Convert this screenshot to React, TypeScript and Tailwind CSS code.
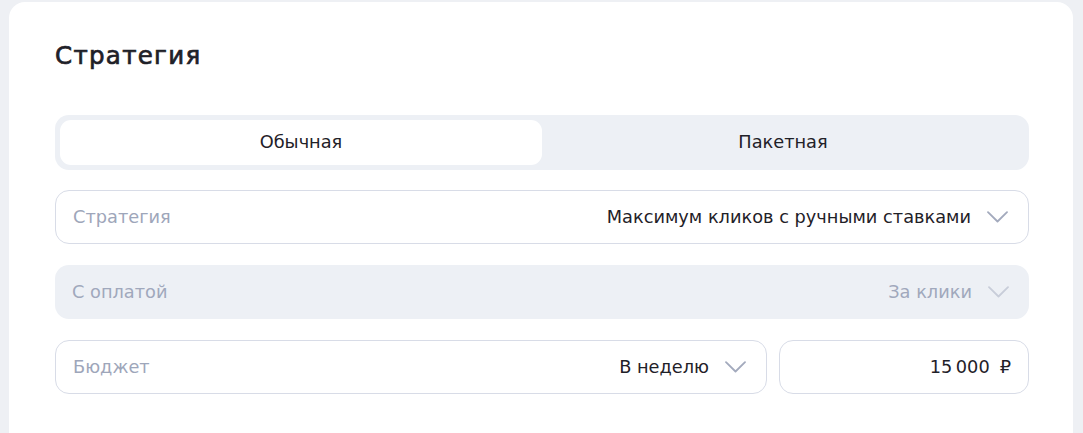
import React from "react";

const Chevron = ({ color }: { color: string }) => (
  <svg width="21" height="12" viewBox="0 0 21 12" fill="none" className="shrink-0">
    <path d="M1 1.2 L10.5 10.5 L20 1.2" stroke={color} strokeWidth="1.8" strokeLinecap="round" strokeLinejoin="round" />
  </svg>
);

export default function App() {
  return (
    <div className="w-[1083px] h-[433px] overflow-hidden bg-[#eef0f4] pt-[2px] pl-[9px] pr-[10px]" style={{ fontFamily: "'DejaVu Sans', 'Noto Sans', sans-serif" }}>
      <div className="bg-white rounded-[16px] h-[460px] pl-[46px] pr-[44px] pt-[38px]">
        <h1 className="text-[24.5px] leading-[32px] font-normal tracking-[1.3px] text-[#1f2128] [-webkit-text-stroke:0.7px_#1f2128]">Стратегия</h1>

        <div className="mt-[43px] h-[55px] rounded-[14px] bg-[#edf0f5] p-[5px] flex">
          <div className="flex-1 rounded-[11px] bg-white flex items-center justify-center text-[17.75px] text-[#1f2128]">Обычная</div>
          <div className="flex-1 flex items-center justify-center text-[17.75px] text-[#1f2128]">Пакетная</div>
        </div>

        <div className="mt-[20px] h-[54px] rounded-[14px] border border-[#d8dce7] flex items-center pl-[17px] pr-[20px]">
          <span className="text-[17.75px] text-[#9ea6ba]">Стратегия</span>
          <span className="ml-auto text-[17.75px] text-[#1f2128]">Максимум кликов с ручными ставками</span>
          <span className="ml-[16px]"><Chevron color="#a3aabd" /></span>
        </div>

        <div className="mt-[21px] h-[54px] rounded-[14px] bg-[#edf0f5] flex items-center pl-[17px] pr-[20px]">
          <span className="text-[17.75px] text-[#a0a8bc]">С оплатой</span>
          <span className="ml-auto text-[17.75px] text-[#a0a8bc]">За клики</span>
          <span className="ml-[16px]"><Chevron color="#c8cdd9" /></span>
        </div>

        <div className="mt-[21px] flex gap-[12px]">
          <div className="flex-1 h-[54px] rounded-[14px] border border-[#d8dce7] flex items-center pl-[17px] pr-[20px]">
            <span className="text-[17.75px] text-[#9ea6ba]">Бюджет</span>
            <span className="ml-auto text-[17.75px] text-[#1f2128]">В неделю</span>
            <span className="ml-[16px]"><Chevron color="#a3aabd" /></span>
          </div>
          <div className="w-[250px] h-[54px] rounded-[14px] border border-[#d8dce7] flex items-center justify-end pr-[17px]">
            <span className="text-[17.75px] text-[#1f2128]">15{"\u202F"}000</span>
            <span className="ml-[10px] text-[17.75px] text-[#1f2128]">₽</span>
          </div>
        </div>
      </div>
    </div>
  );
}
